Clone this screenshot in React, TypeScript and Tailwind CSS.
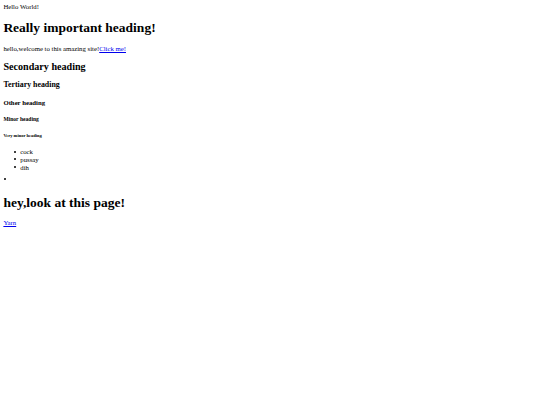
export default function App() {
  const items = ["cock", "pussay", "dih"];
  return (
    <div className="font-['Liberation_Serif',serif] text-[6.75px] leading-[7.594px] text-black p-[3.375px]">
      <div>Hello World!</div>
      <h1 className="text-[13.5px] leading-[15.61px] font-bold my-[9.045px]">Really important heading!</h1>
      <p className="my-[6.75px]">
        hello,welcome to this amazing site!<a href="#" className="text-[#0000ee] underline">Click me!</a>
      </p>
      <h2 className="text-[10.125px] leading-[11.39px] font-bold my-[8.4px]">Secondary heading</h2>
      <h3 className="text-[7.8975px] leading-[9.28px] font-bold my-[7.9px]">Tertiary heading</h3>
      <h4 className="text-[6.75px] leading-[7.594px] font-bold my-[8.98px]">Other heading</h4>
      <h5 className="text-[5.6025px] leading-[6.75px] font-bold my-[9.356px]">Minor heading</h5>
      <h6 className="text-[4.5225px] leading-[5.06px] font-bold my-[10.54px]">Very minor heading</h6>
      <ul className="list-none my-[6.75px] pl-[16.875px]">
        {items.map((t) => (
          <li key={t} className="flex items-center">
            <span className="w-[2px] h-[2px] rounded-full bg-black -ml-[6px] mr-[4px] mb-[1px] shrink-0" />
            <span>{t}</span>
          </li>
        ))}
      </ul>
      <ul className="list-none my-[6.75px] p-0">
        <li className="h-[7.594px]">
          <span className="block w-[2px] h-[2px] rounded-full bg-black ml-[0.4px]" />
        </li>
      </ul>
      <h1 className="text-[13.5px] leading-[15.61px] font-bold my-[9.045px]">hey,look at this page!</h1>
      <div>
        <a href="#" className="text-[#0000ee] underline">Yarn</a>
      </div>
    </div>
  );
}
